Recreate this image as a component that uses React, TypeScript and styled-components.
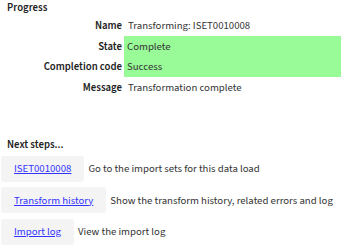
import styled, { createGlobalStyle } from "styled-components";

const GlobalStyle = createGlobalStyle`
  body {
    margin: 0;
    background: #ffffff;
    font-family: "Source Sans 3", Lato, sans-serif;
    font-size: 10.75px;
    color: #333333;
  }
`;

const Page = styled.div`
  width: 341px;
  height: 249px;
  overflow: hidden;
  white-space: nowrap;
`;

const SectionTitle = styled.div`
  font-weight: 600;
  color: #222;
  padding-left: 7px;
  line-height: 15px;
  height: 15.5px;
`;

const DetailTable = styled.div`
  display: grid;
  grid-template-columns: 124px 1fr;
  grid-auto-rows: 20.5px;
`;

const Label = styled.div`
  font-weight: 600;
  color: #222;
  padding-right: 2px;
  display: flex;
  align-items: center;
  justify-content: flex-end;
`;

const Value = styled.div<{ $ok?: boolean }>`
  display: flex;
  align-items: center;
  padding-left: ${(p) => (p.$ok ? "3px" : "4px")};
  background: ${(p) => (p.$ok ? "#98fb98" : "transparent")};
`;

const NextTitle = styled(SectionTitle)`
  margin-top: 39px;
  height: auto;
`;

const Steps = styled.div`
  display: flex;
  flex-direction: column;
  gap: 5.5px;
  margin-top: 4px;
  padding-left: 1px;
`;

const Step = styled.div`
  display: flex;
  align-items: center;
  gap: 4px;
`;

const StepButton = styled.div`
  background: #f4f4f4;
  border-radius: 3px;
  height: 26px;
  padding: 0 13px;
  display: flex;
  align-items: center;
`;

const StepLink = styled.a`
  color: #3333ff;
  text-decoration: underline;
  cursor: pointer;
`;

const StepText = styled.span`
  color: #333;
`;

const steps = [
  { link: "ISET0010008", text: "Go to the import sets for this data load" },
  { link: "Transform history", text: "Show the transform history, related errors and log" },
  { link: "Import log", text: "View the import log" },
];

export default function App() {
  return (
    <Page>
      <GlobalStyle />
      <SectionTitle>Progress</SectionTitle>
      <DetailTable>
        <Label>Name</Label>
        <Value>Transforming: ISET0010008</Value>
        <Label>State</Label>
        <Value $ok>Complete</Value>
        <Label>Completion code</Label>
        <Value $ok>Success</Value>
        <Label>Message</Label>
        <Value>Transformation complete</Value>
      </DetailTable>
      <NextTitle>Next steps...</NextTitle>
      <Steps>
        {steps.map((s) => (
          <Step key={s.link}>
            <StepButton>
              <StepLink>{s.link}</StepLink>
            </StepButton>
            <StepText>{s.text}</StepText>
          </Step>
        ))}
      </Steps>
    </Page>
  );
}
